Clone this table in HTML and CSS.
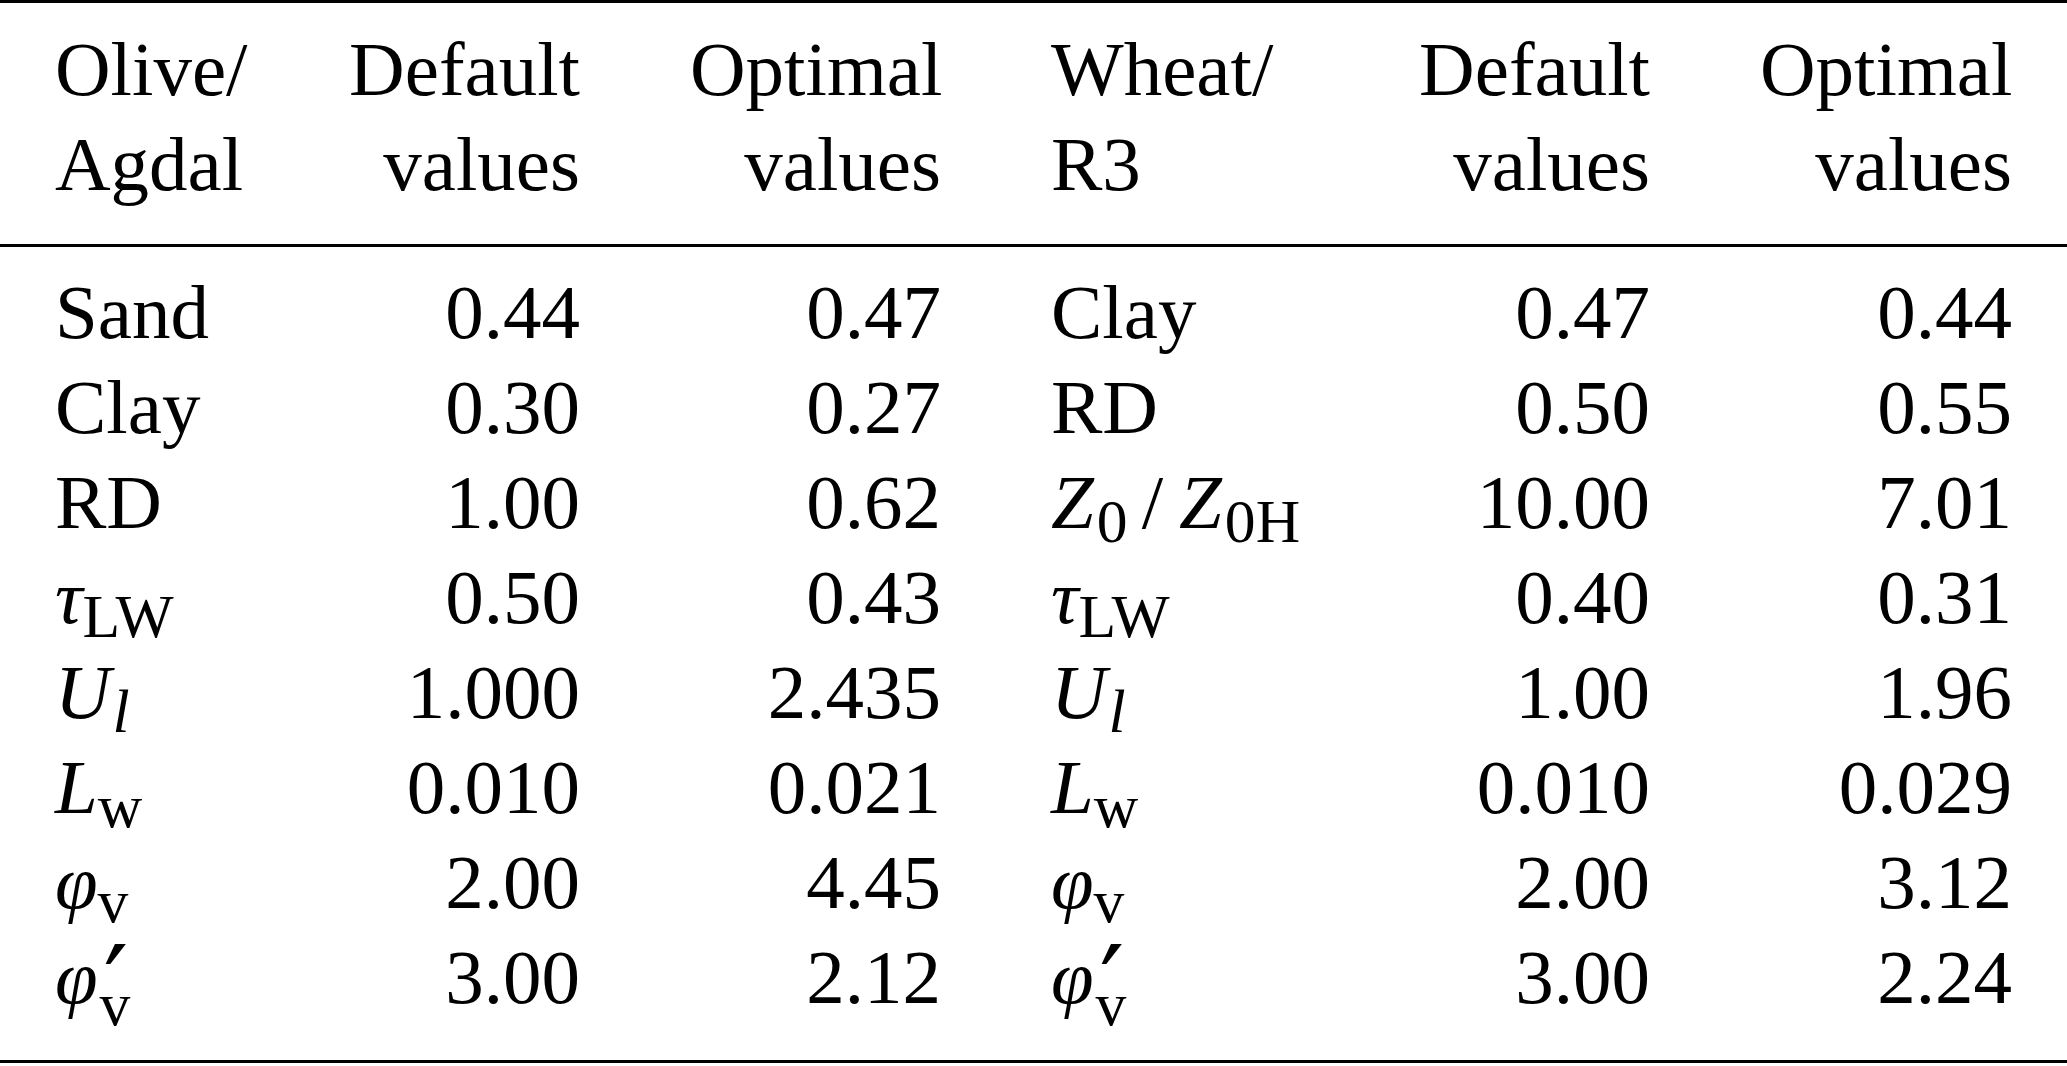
FILE: index.html
```html
<!DOCTYPE html>
<html lang="en">
<head>
<meta charset="utf-8">
<title>Parameters</title>
<link rel="stylesheet" href="styles.css">
</head>
<body>
<table class="tbl">
  <colgroup>
    <col class="c1"><col class="c2"><col class="c3"><col class="c4"><col class="c5"><col class="c6">
  </colgroup>
  <thead>
    <tr>
      <th class="l">Olive/<br>Agdal</th>
      <th class="r">Default<br>values</th>
      <th class="r">Optimal<br>values</th>
      <th class="l">Wheat/<br>R3</th>
      <th class="r">Default<br>values</th>
      <th class="r">Optimal<br>values</th>
    </tr>
  </thead>
  <tbody>
    <tr><td class="l">Sand</td><td class="r">0.44</td><td class="r">0.47</td><td class="l">Clay</td><td class="r">0.47</td><td class="r">0.44</td></tr>
    <tr><td class="l">Clay</td><td class="r">0.30</td><td class="r">0.27</td><td class="l">RD</td><td class="r">0.50</td><td class="r">0.55</td></tr>
    <tr><td class="l">RD</td><td class="r">1.00</td><td class="r">0.62</td><td class="l"><i class="m z">Z</i><span class="sub">0</span><span class="slash">/</span><i class="m z">Z</i><span class="sub">0H</span></td><td class="r">10.00</td><td class="r">7.01</td></tr>
    <tr><td class="l"><i class="m">τ</i><span class="sub">LW</span></td><td class="r">0.50</td><td class="r">0.43</td><td class="l"><i class="m">τ</i><span class="sub">LW</span></td><td class="r">0.40</td><td class="r">0.31</td></tr>
    <tr><td class="l"><i class="m">U</i><i class="sub">l</i></td><td class="r">1.000</td><td class="r">2.435</td><td class="l"><i class="m">U</i><i class="sub">l</i></td><td class="r">1.00</td><td class="r">1.96</td></tr>
    <tr><td class="l"><i class="m">L</i><span class="sub">w</span></td><td class="r">0.010</td><td class="r">0.021</td><td class="l"><i class="m">L</i><span class="sub">w</span></td><td class="r">0.010</td><td class="r">0.029</td></tr>
    <tr><td class="l"><i class="m">φ</i><span class="sub">v</span></td><td class="r">2.00</td><td class="r">4.45</td><td class="l"><i class="m">φ</i><span class="sub">v</span></td><td class="r">2.00</td><td class="r">3.12</td></tr>
    <tr><td class="l"><i class="m">φ</i><span class="ss"><span class="pr">′</span><span class="sv">v</span></span></td><td class="r">3.00</td><td class="r">2.12</td><td class="l"><i class="m">φ</i><span class="ss"><span class="pr">′</span><span class="sv">v</span></span></td><td class="r">3.00</td><td class="r">2.24</td></tr>
  </tbody>
</table>
</body>
</html>
```
FILE: styles.css
```css
html, body {
  margin: 0;
  padding: 0;
  background: #fff;
}

.tbl {
  width: 2067px;
  table-layout: fixed;
  border-collapse: collapse;
  font-family: "Liberation Serif", "Times New Roman", serif;
  font-size: 77px;
  line-height: 95px;
  color: #000;
}

.c1 { width: 260px; }
.c2 { width: 375px; }
.c3 { width: 361px; }
.c4 { width: 354px; }
.c5 { width: 355px; }
.c6 { width: 362px; }

.tbl th,
.tbl td {
  padding: 0 55px;
  font-weight: normal;
  white-space: nowrap;
  vertical-align: top;
}

.tbl thead tr {
  border-top: 3px solid #000;
  border-bottom: 3px solid #000;
}

.tbl thead th {
  padding-top: 19px;
  padding-bottom: 32px;
}

.tbl tbody tr:first-child td {
  padding-top: 18px;
}

.tbl tbody tr:last-child {
  border-bottom: 3px solid #000;
}

.tbl tbody tr:last-child td {
  padding-bottom: 35px;
}

.l { text-align: left; }
.r { text-align: right; }

.m {
  font-style: italic;
}

.z {
  letter-spacing: 3px;
}

.sub {
  font-size: 0.8em;
  line-height: 0;
  vertical-align: -14px;
}

i.sub {
  font-style: italic;
  margin-left: 2px;
}

.slash {
  margin: 0 16px 0 14px;
}

.ss {
  display: inline-block;
  vertical-align: top;
  height: 95px;
  margin-left: 2px;
}

.pr {
  display: block;
  position: relative;
  top: 30px;
  font-family: "DejaVu Serif", serif;
  font-size: 110px;
  line-height: 54px;
  height: 54px;
  padding-left: 4px;
}

.sv {
  display: block;
  font-size: 61.6px;
  line-height: 41px;
  height: 41px;
}
```
